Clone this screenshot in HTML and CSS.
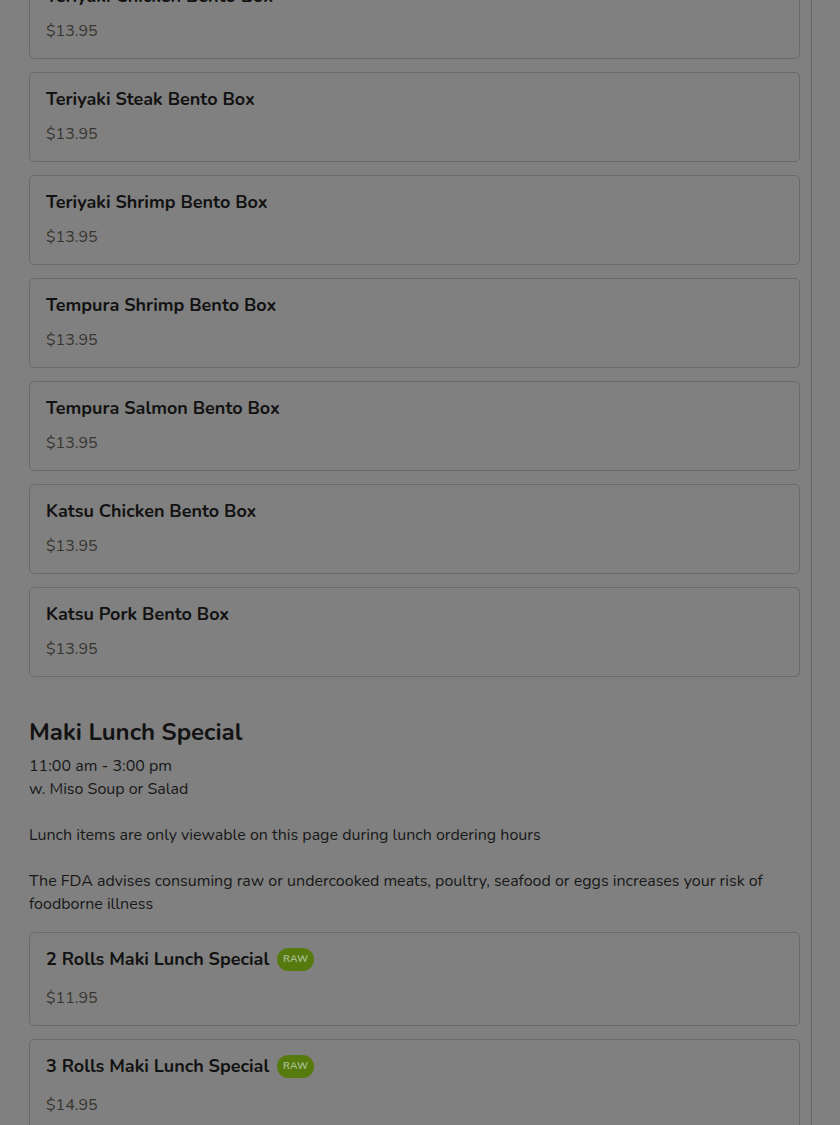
FILE: index.html
```html
<!DOCTYPE html>
<html>
<head>
<meta charset="utf-8">
<link rel="stylesheet" href="styles.css">
</head>
<body>
<div class="page">
  <div class="content">
    <div class="card"><div class="name">Teriyaki Chicken Bento Box</div><div class="price">$13.95</div></div>
    <div class="card"><div class="name">Teriyaki Steak Bento Box</div><div class="price">$13.95</div></div>
    <div class="card"><div class="name">Teriyaki Shrimp Bento Box</div><div class="price">$13.95</div></div>
    <div class="card"><div class="name">Tempura Shrimp Bento Box</div><div class="price">$13.95</div></div>
    <div class="card"><div class="name">Tempura Salmon Bento Box</div><div class="price">$13.95</div></div>
    <div class="card"><div class="name">Katsu Chicken Bento Box</div><div class="price">$13.95</div></div>
    <div class="card"><div class="name">Katsu Pork Bento Box</div><div class="price">$13.95</div></div>

    <h2 class="section-title">Maki Lunch Special</h2>
    <div class="section-desc">
      <p>11:00 am - 3:00 pm<br>w. Miso Soup or Salad</p>
      <p>Lunch items are only viewable on this page during lunch ordering hours</p>
      <p>The FDA advises consuming raw or undercooked meats, poultry, seafood or eggs increases your risk of foodborne illness</p>
    </div>

    <div class="card card-tag"><div class="name">2 Rolls Maki Lunch Special <span class="badge">RAW</span></div><div class="price">$11.95</div></div>
    <div class="card card-tag"><div class="name">3 Rolls Maki Lunch Special <span class="badge">RAW</span></div><div class="price">$14.95</div></div>
  </div>
</div>
</body>
</html>
```

FILE: styles.css
```css
html, body {
  margin: 0;
  padding: 0;
  background: #808080;
  height: 100%;
  overflow: hidden;
}
body {
  font-family: "Nunito", "Lato", "Noto Sans", sans-serif;
  color: #161616;
}
.page {
  width: 812px;
  border-right: 1px solid #676767;
  box-sizing: border-box;
  min-height: 100%;
}
.content {
  margin-top: -31px;
  padding: 0 11px 0 29px;
}
.card {
  box-sizing: border-box;
  height: 90px;
  border: 1px solid #6a6a6a;
  border-radius: 5px;
  padding: 13px 16px 0 16px;
  margin-bottom: 13px;
}
.name {
  font-size: 18px;
  font-weight: 700;
  line-height: 26px;
  height: 26px;
  display: flex;
  align-items: center;
  color: #121212;
}
.price {
  margin-top: 10px;
  font-size: 16px;
  line-height: 24px;
  color: #37362f;
}
.card-tag {
  height: 94px;
  padding-top: 11px;
}
.card-tag .name {
  height: 30px;
  line-height: 30px;
}
.card-tag .price {
  margin-top: 12px;
}
.badge {
  display: inline-flex;
  align-items: center;
  justify-content: center;
  margin-left: 8px;
  width: 37px;
  height: 23px;
  border-radius: 12px;
  background: #567a0e;
  color: #a3b987;
  font-size: 10px;
  font-weight: 700;
  letter-spacing: 0.2px;
  line-height: 1;
}
.section-title {
  margin: 39px 0 0 0;
  font-size: 24px;
  font-weight: 700;
  line-height: 32px;
  color: #121212;
}
.section-desc {
  margin-top: 7px;
  margin-bottom: 16px;
  font-size: 16px;
  line-height: 23px;
  color: #181818;
}
.section-desc p {
  margin: 0 0 23px 0;
}
.section-desc p:last-child {
  margin-bottom: 0;
}
```
